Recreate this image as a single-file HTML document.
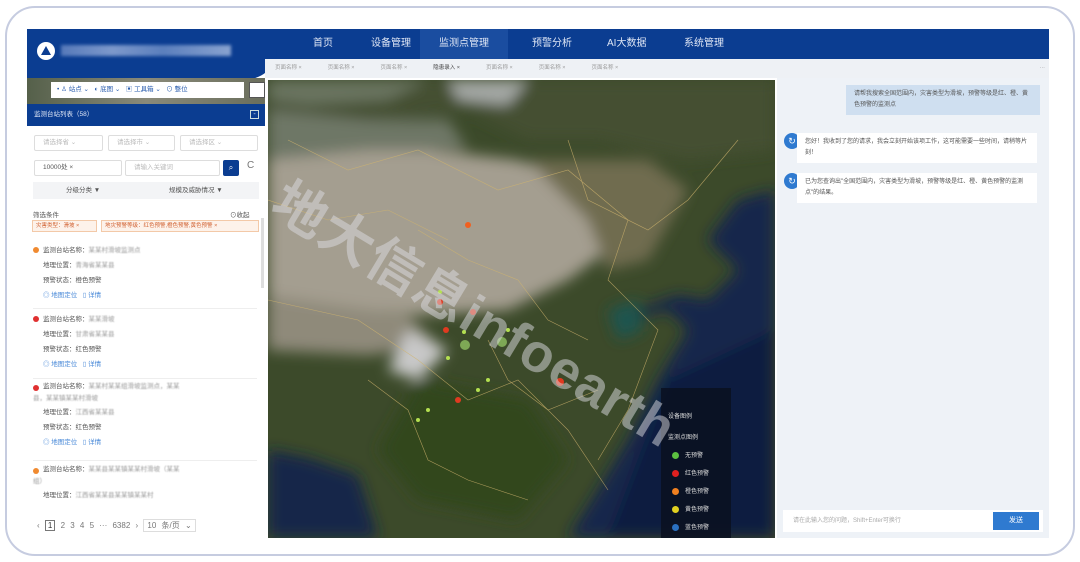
<!DOCTYPE html>
<html><head><meta charset="utf-8"><style>
*{margin:0;padding:0;box-sizing:border-box}
body{width:1080px;height:562px;background:#fff;font-family:"Liberation Sans","Noto Sans CJK SC",sans-serif;position:relative;overflow:hidden}
.frame{position:absolute;left:5px;top:6px;width:1070px;height:550px;border:2px solid #c6cce0;border-radius:30px}
.app{position:absolute;left:27px;top:29px;width:1022px;height:509px;background:#fff;overflow:hidden}
.hdr{position:absolute;left:0;top:0;width:1022px;height:30px;background:#0b3d91}
.logo{position:absolute;left:0;top:0;width:250px;height:50px;background:#0b3d91;border-bottom-right-radius:30px}
.nav{position:absolute;top:0;height:30px;line-height:30px;color:#dfe6f5;font-size:10px}
.tabs{position:absolute;left:238px;top:30px;width:784px;height:19px;background:#eef1f5;font-size:5.5px;color:#999;line-height:19px}
.tabs span{margin-left:10px;margin-right:16px}
.left{position:absolute;left:0;top:49px;width:238px;height:460px;background:#fff}
.map{position:absolute;left:241px;top:51px;width:507px;height:458px;overflow:hidden;background:#3e4a30}
.chat{position:absolute;left:750px;top:49px;width:272px;height:460px;background:#eef2f7}
.t{font-size:6.5px;color:#555;position:absolute}
.blur{color:#999;filter:blur(.6px)}
.sel{position:absolute;height:16px;border:1px solid #ddd;border-radius:2px;font-size:6.5px;color:#bbb;line-height:14px;padding-left:8px}
.item{position:absolute;left:6px;width:224px;font-size:6.5px;color:#555;border-bottom:1px solid #eee}
.item div{height:15px;line-height:15px;padding-left:10px}
.dot{position:absolute;left:0;top:4px;width:6px;height:6px;border-radius:50%}
.lnk{color:#4a8ad8}
.bub{position:absolute;background:#fff;font-size:6px;color:#555;line-height:11px;padding:4px 8px}
.av{position:absolute;width:16px;height:16px;border-radius:50%;background:#2f7ad0;color:#fff;font-size:9px;text-align:center;line-height:16px}
.lg{position:absolute;font-size:6px;color:#ddd}
.lg i{display:inline-block;width:7px;height:7px;border-radius:50%;margin-right:6px;vertical-align:middle}
</style></head><body>
<div class="frame"></div>
<div class="app">
 <div class="hdr"></div>
 <div class="logo">
  <div style="position:absolute;left:10px;top:13px;width:18px;height:18px;border-radius:50%;background:#fff"></div>
  <div style="position:absolute;left:14px;top:17px;width:0;height:0;border-left:5px solid transparent;border-right:5px solid transparent;border-bottom:9px solid #0b3d91"></div>
  <div style="position:absolute;left:34px;top:16px;width:170px;height:11px;background:linear-gradient(90deg,#6a89c4,#9ab0da 30%,#7090c8 60%,#a9bde0);filter:blur(1.5px);opacity:.8"></div>
 </div>
 <div class="nav" style="left:286px">首页</div>
 <div class="nav" style="left:344px">设备管理</div>
 <div class="nav" style="left:393px;width:88px;background:#1a4da0;text-align:center">监测点管理</div>
 <div class="nav" style="left:505px">预警分析</div>
 <div class="nav" style="left:580px">AI大数据</div>
 <div class="nav" style="left:657px">系统管理</div>
 <div class="tabs"><span>页面名称 ×</span><span>页面名称 ×</span><span>页面名称 ×</span><span style="color:#444">隐患录入 ×</span><span>页面名称 ×</span><span>页面名称 ×</span><span>页面名称 ×</span><span style="position:absolute;right:4px;margin:0">···</span></div>
 <div class="left">
  <div style="position:absolute;left:0;top:0;width:238px;height:30px;background:linear-gradient(90deg,#55604a,#8a8a7a,#6a6e5c)"></div>
  <div style="position:absolute;left:24px;top:4px;width:193px;height:16px;background:#fff;font-size:6.5px;color:#2a5dae;line-height:16px;padding-left:6px">• ♙ 站点 ⌄ &nbsp; ◐ 底图 ⌄ &nbsp; ▣ 工具箱 ⌄ &nbsp; ⊙ 整位</div>
  <div style="position:absolute;left:222px;top:4px;width:16px;height:16px;background:#fff;border:1px solid #555"></div>
  <div style="position:absolute;left:0;top:26px;width:238px;height:22px;background:#0b3d91;color:#dfe6f5;font-size:6.5px;line-height:22px;padding-left:7px">监测台站列表（58）<span style="position:absolute;right:6px;top:6px;width:9px;height:9px;border:1px solid #cdd;line-height:7px;font-size:7px;text-align:center">-</span></div>
  <div class="sel" style="left:7px;top:57px;width:69px">请选择省 ⌄</div>
  <div class="sel" style="left:81px;top:57px;width:67px">请选择市 ⌄</div>
  <div class="sel" style="left:153px;top:57px;width:78px">请选择区 ⌄</div>
  <div class="sel" style="left:7px;top:82px;width:88px;color:#555">10000处 ×</div>
  <div class="sel" style="left:98px;top:82px;width:95px">请输入关键词</div>
  <div style="position:absolute;left:196px;top:82px;width:16px;height:16px;background:#0b3d91;border-radius:2px;color:#fff;font-size:8px;text-align:center;line-height:16px">⌕</div>
  <div style="position:absolute;left:220px;top:82px;font-size:10px;color:#777">C</div>
  <div style="position:absolute;left:6px;top:104px;width:226px;height:17px;background:#f3f4f6;font-size:6.5px;color:#555;line-height:17px"><span style="position:absolute;left:33px">分级分类 ▼</span><span style="position:absolute;left:136px">规模及威胁情况 ▼</span></div>
  <div class="t" style="left:6px;top:131px">筛选条件</div><div class="t" style="left:203px;top:131px">⊙收起</div>
  <div style="position:absolute;left:5px;top:142px;width:65px;height:12px;border:1px solid #f3c9a8;background:#fdf2ea;font-size:5.5px;color:#d06030;line-height:10px;padding-left:3px">灾害类型：滑坡 ×</div>
  <div style="position:absolute;left:74px;top:142px;width:158px;height:12px;border:1px solid #f3c9a8;background:#fdf2ea;font-size:5.5px;color:#d06030;line-height:10px;padding-left:3px">地灾预警等级：红色预警,橙色预警,黄色预警 ×</div>
  <div class="item" style="top:165px;height:66px"><span class="dot" style="background:#f08a30"></span><div>监测台站名称：<span class="blur">某某村滑坡监测点</span></div><div>地理位置：<span class="blur">青海省某某县</span></div><div>预警状态：橙色预警</div><div class="lnk">◎ 地图定位 &nbsp; ▯ 详情</div></div>
  <div class="item" style="top:234px;height:67px"><span class="dot" style="background:#e03030"></span><div>监测台站名称：<span class="blur">某某滑坡</span></div><div>地理位置：<span class="blur">甘肃省某某县</span></div><div>预警状态：红色预警</div><div class="lnk">◎ 地图定位 &nbsp; ▯ 详情</div></div>
  <div class="item" style="top:303px;height:80px"><span class="dot" style="background:#e03030"></span><div style="height:12px;line-height:12px">监测台站名称：<span class="blur">某某村某某组滑坡监测点，某某</span></div><div style="padding-left:0;height:12px;line-height:12px" class="blur">县，某某镇某某村滑坡</div><div>地理位置：<span class="blur">江西省某某县</span></div><div>预警状态：红色预警</div><div class="lnk">◎ 地图定位 &nbsp; ▯ 详情</div></div>
  <div class="item" style="top:386px;height:48px;border:none"><span class="dot" style="background:#f08a30"></span><div style="height:12px;line-height:12px">监测台站名称：<span class="blur">某某县某某镇某某村滑坡（某某</span></div><div style="padding-left:0;height:12px;line-height:12px" class="blur">组）</div><div>地理位置：<span class="blur">江西省某某县某某镇某某村</span></div></div>
  <div style="position:absolute;left:10px;top:442px;font-size:8px;color:#777;word-spacing:3px">‹ <span style="border:1px solid #777;padding:0 2px;color:#333">1</span> 2 3 4 5 ··· 6382 › <span style="border:1px solid #ddd;padding:1px 3px">10 条/页 ⌄</span></div>
  <div style="position:absolute;left:234px;top:140px;width:3px;height:70px;background:#ddd"></div>
 </div>
 <div class="map">
  <svg width="507" height="458" viewBox="0 0 507 458">
   <defs><filter id="b"><feGaussianBlur stdDeviation="7"/></filter></defs>
   <rect width="507" height="458" fill="#3c4a2a"/>
   <g filter="url(#b)">
    <path d="M0 0H507V70L420 80 330 60 260 60 200 30 100 40 0 30Z" fill="#454f33"/>
    <path d="M0 60 80 50 160 70 250 80 330 110 340 170 300 200 240 230 150 235 60 225 0 215Z" fill="#a49e90"/>
    <path d="M0 30 100 40 180 40 200 70 100 70 0 80Z" fill="#6e7766"/>
    <path d="M260 80 380 80 420 110 380 180 340 190 320 140Z" fill="#6f6c50"/>
    <path d="M0 215 140 235 170 265 100 275 0 270Z" fill="#8f8a7a"/>
    <path d="M140 250 180 270 150 300 120 290Z" fill="#c8c8c8"/>
    <path d="M0 0H160L120 20 40 25 0 20Z" fill="#6b7560"/>
    <path d="M180 0 260 0 240 25 190 20Z" fill="#a5a9a6"/>
    <path d="M365 240 400 230 420 250 390 300 360 360 330 410 300 458H507V140L470 190 440 220 410 215 380 225Z" fill="#13264b"/>
    <path d="M400 300 507 250V458H340Z" fill="#0f1f40"/>
    <path d="M0 370 40 378 90 395 110 458H0Z" fill="#132548"/>
    <path d="M440 160 470 120 507 110 507 150 470 190Z" fill="#13264b"/>
    <path d="M340 230 370 220 375 250 350 260Z" fill="#1e5550"/>
    <path d="M150 300 260 320 300 380 250 440 150 420 110 370Z" fill="#33461f"/>
   </g>
   <g fill="none" stroke="#d0b46e" stroke-width=".6" opacity=".75">
    <path d="M20 60 80 90 150 70 230 110 300 90 360 140 340 200 390 250 360 330 330 380"/>
    <path d="M0 220 90 240 150 280 200 320 250 300 300 350 340 410"/>
    <path d="M150 150 200 180 250 200 280 240 320 260"/>
    <path d="M100 300 140 330 160 380 200 400 260 420"/>
    <path d="M300 60 320 120 380 150 420 120 470 60"/>
    <path d="M0 120 60 140 120 130 180 160"/>
    <path d="M220 260 240 300 280 330 330 310"/>
   </g>
   <g fill="#b4e050"><circle cx="180" cy="278" r="2"/><circle cx="196" cy="252" r="2"/><circle cx="220" cy="300" r="2"/><circle cx="160" cy="330" r="2"/><circle cx="210" cy="310" r="2"/><circle cx="240" cy="250" r="2"/><circle cx="150" cy="340" r="2"/><circle cx="172" cy="212" r="2"/></g>
   <g fill="#e03a20"><circle cx="205" cy="232" r="3"/><circle cx="178" cy="250" r="3"/><circle cx="292" cy="302" r="4"/><circle cx="190" cy="320" r="3"/><circle cx="172" cy="222" r="3"/><circle cx="200" cy="145" r="3" fill="#f06020"/></g>
   <g fill="#8fc060" opacity=".8"><circle cx="197" cy="265" r="5"/><circle cx="234" cy="262" r="5"/></g>
   <rect x="393" y="308" width="70" height="150" fill="#0a1020" opacity=".85"/>
  </svg>
  <div class="lg" style="left:400px;top:331px">设备图例</div>
  <div class="lg" style="left:400px;top:352px">监测点图例</div>
  <div class="lg" style="left:404px;top:370px"><i style="background:#5cc040"></i>无预警</div>
  <div class="lg" style="left:404px;top:388px"><i style="background:#e02020"></i>红色预警</div>
  <div class="lg" style="left:404px;top:406px"><i style="background:#f08020"></i>橙色预警</div>
  <div class="lg" style="left:404px;top:424px"><i style="background:#e0d020"></i>黄色预警</div>
  <div class="lg" style="left:404px;top:442px"><i style="background:#2a70c0"></i>蓝色预警</div>
 </div>
 <div class="chat">
  <div class="bub" style="left:69px;top:7px;width:194px;background:#cfdff0">请帮我搜索全国范围内，灾害类型为滑坡，预警等级是红、橙、黄色预警的监测点</div>
  <div class="av" style="left:7px;top:55px">↻</div>
  <div class="bub" style="left:20px;top:55px;width:240px">您好！我收到了您的请求，我会立刻开始该项工作，这可能需要一些时间，请稍等片刻！</div>
  <div class="av" style="left:7px;top:95px">↻</div>
  <div class="bub" style="left:20px;top:95px;width:240px">已为您查询出"全国范围内，灾害类型为滑坡，预警等级是红、橙、黄色预警的监测点"的结果。</div>
  <div style="position:absolute;left:6px;top:432px;width:260px;height:22px;background:#fff;font-size:6px;color:#aaa;line-height:22px;padding-left:10px">请在此输入您的问题，Shift+Enter可换行</div>
  <div style="position:absolute;left:216px;top:434px;width:46px;height:18px;background:#2f7ad0;color:#fff;font-size:7px;text-align:center;line-height:18px">发送</div>
 </div>
</div>
<div style="position:absolute;left:300px;top:158px;transform:rotate(31deg);transform-origin:0 0;font-size:54px;font-weight:bold;color:rgba(220,220,225,.5);white-space:nowrap;letter-spacing:1px">地大信息infoearth</div>
</body></html>
